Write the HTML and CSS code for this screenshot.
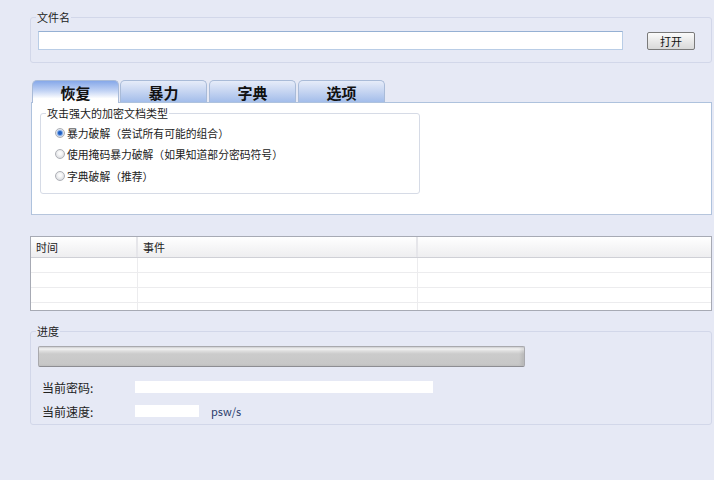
FILE: index.html
```html
<!DOCTYPE html>
<html lang="zh-CN">
<head>
<meta charset="utf-8">
<title>恢复</title>
<link rel="stylesheet" href="styles.css">
</head>
<body>
<div class="app">
  <fieldset class="group file-group">
    <legend>文件名</legend>
    <div class="file-row">
      <input class="file-input" type="text">
      <button class="btn" type="button">打开</button>
    </div>
  </fieldset>

  <div class="tabs">
    <div class="tab active">恢复</div>
    <div class="tab">暴力</div>
    <div class="tab">字典</div>
    <div class="tab">选项</div>
  </div>
  <div class="panel">
    <fieldset class="group attack-group">
      <legend>攻击强大的加密文档类型</legend>
      <div class="radio-row"><span class="radio checked"></span><span class="radio-text">暴力破解（尝试所有可能的组合）</span></div>
      <div class="radio-row"><span class="radio"></span><span class="radio-text">使用掩码暴力破解（如果知道部分密码符号）</span></div>
      <div class="radio-row"><span class="radio"></span><span class="radio-text">字典破解（推荐）</span></div>
    </fieldset>
  </div>

  <div class="log">
    <div class="log-head">
      <div class="cell">时间</div>
      <div class="cell">事件</div>
      <div class="cell"></div>
    </div>
    <div class="log-row"><div class="cell"></div><div class="cell"></div><div class="cell"></div></div>
    <div class="log-row"><div class="cell"></div><div class="cell"></div><div class="cell"></div></div>
    <div class="log-row"><div class="cell"></div><div class="cell"></div><div class="cell"></div></div>
    <div class="log-row"><div class="cell"></div><div class="cell"></div><div class="cell"></div></div>
  </div>

  <fieldset class="group progress-group">
    <legend>进度</legend>
    <div class="progress-bar"></div>
    <div class="info-row"><span class="info-label">当前密码:</span><span class="field field-long"></span></div>
    <div class="info-row"><span class="info-label">当前速度:</span><span class="field field-short"></span><span class="unit">psw/s</span></div>
  </fieldset>
</div>
</body>
</html>
```

FILE: styles.css
```css
* { box-sizing: border-box; }

html, body {
  margin: 0;
  background: #e6e9f5;
}

body {
  font-family: "Noto Sans CJK SC", "Noto Sans", sans-serif;
  font-size: 11px;
  color: #222;
  height: 480px;
  overflow: hidden;
}

.app {
  padding: 10px 2px 0 30px;
}

.group {
  margin: 0;
  border: 1px solid #d2d7e9;
  border-radius: 3px;
  padding: 0;
  min-width: 0;
}

.group legend {
  padding: 0 1px;
  margin-left: -2px;
  font-size: 11px;
  line-height: 14px;
  color: #222;
}

/* file group */
.file-group {
  padding: 7px 7px 12px 7px;
}

.file-row {
  display: flex;
  align-items: flex-start;
}

.file-input {
  width: 585px;
  height: 19px;
  margin: 0;
  padding: 0 3px;
  border: 1px solid #b9cde6;
  border-top-color: #95b0d3;
  background: #fff;
  outline: none;
}

.btn {
  margin: 1px 0 0 24px;
  width: 48px;
  height: 18px;
  padding: 0;
  border: 1px solid #7a7a7a;
  border-radius: 2px;
  background: linear-gradient(#fbfbfb, #e9e9e9 50%, #d9d9d9);
  font-family: inherit;
  font-size: 11px;
  line-height: 15px;
  color: #111;
}

/* tabs */
.tabs {
  display: flex;
  align-items: flex-end;
  margin-top: 17px;
  padding-left: 2px;
  height: 22px;
}

.tab {
  width: 87px;
  height: 22px;
  margin-right: 2px;
  border: 1px solid #a9bbd8;
  border-bottom: none;
  border-radius: 5px 5px 0 0;
  background: linear-gradient(#e6ecf9, #c9d7f2 45%, #a3bdea);
  font-size: 15px;
  font-weight: bold;
  line-height: 23px;
  text-align: center;
  color: #111;
}

.tab.active {
  margin-right: 1px;
  height: 23px;
  margin-bottom: -1px;
  position: relative;
  z-index: 1;
  background: linear-gradient(#86a8e9, #c2d3f4 45%, #ffffff 80%);
}

.panel {
  margin-left: 1px;
  height: 113px;
  border: 1px solid #aec2dd;
  border-bottom-color: #b6c5dc;
  background: #fff;
  padding: 3px 0 0 8px;
}

.attack-group {
  width: 380px;
  border-color: #d6dbe6;
  padding: 2px 0 6px 14px;
}

.attack-group legend {
  margin-left: -9px;
}

.radio-row {
  display: flex;
  align-items: center;
  height: 21.5px;
}

.radio {
  width: 10px;
  height: 10px;
  border-radius: 50%;
  border: 1px solid #aeb0b6;
  background: radial-gradient(circle at 50% 40%, #fbfbfb 20%, #d4d6db 90%);
  position: relative;
  flex: none;
}

.radio.checked::after {
  content: "";
  position: absolute;
  left: 2px;
  top: 2px;
  width: 4px;
  height: 4px;
  border-radius: 50%;
  background: #1f5fc2;
  box-shadow: 0 0 1px 1px #6f9fe6;
}

.radio-text {
  margin-left: 2px;
  font-size: 10.8px;
  color: #222;
}

/* log table */
.log {
  margin-top: 21px;
  height: 75px;
  border: 1px solid #a7aab4;
  background: #fff;
  overflow: hidden;
}

.log-head,
.log-row {
  display: grid;
  grid-template-columns: 107px 280px 1fr;
}

.log-head {
  height: 21px;
  border-bottom: 1px solid #cfd0d6;
  background: linear-gradient(#ffffff, #f6f6f7 50%, #eeeef0);
}

.log-head .cell {
  border-right: 2px solid #e6e6ea;
  padding-left: 5px;
  line-height: 20px;
  font-size: 11px;
}

.log-head .cell:last-child {
  border-right: none;
}

.log-row {
  height: 15px;
  border-bottom: 1px solid #ececee;
}

.log-row .cell {
  border-right: 1px solid #ececee;
}

.log-row .cell:last-child {
  border-right: none;
}

/* progress */
.progress-group {
  margin-top: 13px;
  padding: 8px 7px 1px 7px;
}

.progress-bar {
  width: 487px;
  height: 21px;
  border: 1px solid #a9a9ad;
  border-bottom-color: #8d8d92;
  border-radius: 2px;
  background: linear-gradient(#d6d6d8 0, #f2f2f2 2px, #dedede 4px, #cbcbcb 7px, #c7c7c7);
  box-shadow: inset -3px 0 3px rgba(0, 0, 0, 0.08);
}

.info-row {
  display: flex;
  align-items: center;
  height: 24px;
  padding-left: 4px;
}

.progress-bar + .info-row {
  margin-top: 8px;
}

.info-label {
  width: 93px;
  font-size: 12px;
  color: #222;
}

.field {
  height: 12px;
  background: #fff;
}

.field-long { width: 298px; }
.field-short { width: 64px; }

.unit {
  margin-left: 12px;
  color: #2b3d6b;
}
```
